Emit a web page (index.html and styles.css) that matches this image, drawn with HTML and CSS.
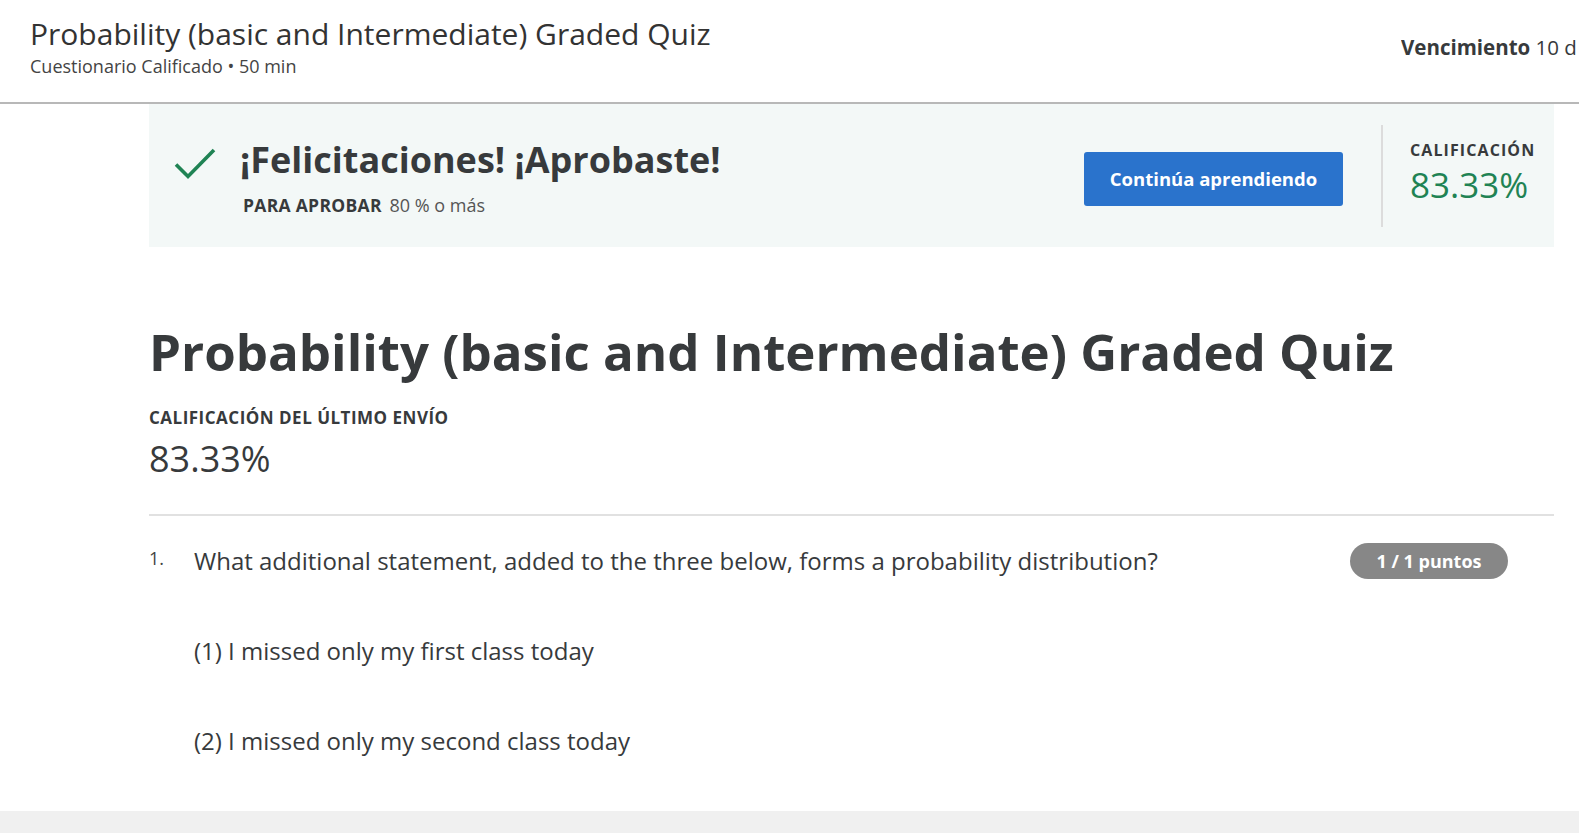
FILE: index.html
```html
<!DOCTYPE html>
<html lang="es">
<head>
<meta charset="utf-8">
<title>Probability (basic and Intermediate) Graded Quiz</title>
<link rel="stylesheet" href="styles.css">
</head>
<body>
<header class="topbar">
  <div class="topbar-info">
    <h1 class="topbar-title">Probability (basic and Intermediate) Graded Quiz</h1>
    <div class="topbar-sub">Cuestionario Calificado • 50 min</div>
  </div>
  <div class="topbar-due"><strong>Vencimiento</strong> 10 d</div>
</header>

<main class="content">
  <section class="banner">
    <div class="banner-main">
      <svg class="banner-check" width="42" height="34" viewBox="0 0 42 34" aria-hidden="true">
        <path d="M2 17.5 L14 29.5 L40 3" fill="none" stroke="#1f8354" stroke-width="3.6"/>
      </svg>
      <div class="banner-text">
        <h2 class="banner-title">¡Felicitaciones! ¡Aprobaste!</h2>
        <div class="banner-pass"><strong>PARA APROBAR</strong> 80 % o más</div>
      </div>
    </div>
    <button class="btn-primary">Continúa aprendiendo</button>
    <div class="banner-divider"></div>
    <div class="banner-grade">
      <div class="label-caps">CALIFICACIÓN</div>
      <div class="grade-value green">83.33%</div>
    </div>
  </section>

  <h2 class="quiz-title">Probability (basic and Intermediate) Graded Quiz</h2>
  <div class="label-caps last-label">CALIFICACIÓN DEL ÚLTIMO ENVÍO</div>
  <div class="grade-value big">83.33%</div>

  <hr class="rule">

  <div class="question">
    <span class="q-num">1.</span>
    <p class="q-text">What additional statement, added to the three below, forms a probability distribution?</p>
    <span class="badge">1 / 1 puntos</span>
  </div>
  <p class="option">(1) I missed only my first class today</p>
  <p class="option option-2">(2) I missed only my second class today</p>
</main>
<footer class="bottom-band"></footer>
</body>
</html>
```

FILE: styles.css
```css
* { box-sizing: border-box; }
html, body {
  margin: 0;
  padding: 0;
  overflow: hidden;
  background: #ffffff;
}
body {
  font-family: "Open Sans", "Noto Sans", sans-serif;
  color: #373a3c;
  width: 1579px;
}

.topbar {
  height: 104px;
  border-bottom: 2px solid #b8b8b8;
  display: flex;
  padding: 15px 0 0 30px;
  white-space: nowrap;
  overflow: hidden;
}
.topbar-title {
  margin: 0;
  font-size: 30px;
  line-height: 38px;
  font-weight: 400;
  color: #333;
}
.topbar-sub {
  margin-top: 1px;
  font-size: 18px;
  line-height: 24px;
  color: #444;
}
.topbar-due {
  margin-left: auto;
  flex: 0 0 auto;
  width: 178px;
  overflow: hidden;
  padding-top: 17px;
  font-size: 20.5px;
  line-height: 30px;
  color: #373a3c;
}
.topbar-due strong { font-weight: 700; }

.content {
  margin-left: 149px;
  width: 1405px;
}

.banner {
  height: 143px;
  background: #f3f8f7;
  display: flex;
  align-items: center;
  padding: 0 19px 0 25px;
}
.banner-main {
  flex: 1;
  display: flex;
  align-items: flex-start;
  gap: 24px;
  padding-top: 4px;
}
.banner-check { margin-top: 9px; }
.banner-title {
  margin: 0;
  font-size: 36px;
  line-height: 44px;
  font-weight: 700;
  color: #373a3c;
}
.banner-pass {
  margin-top: 11px;
  padding-left: 3px;
  font-size: 18px;
  line-height: 24px;
  color: #555;
}
.banner-pass strong {
  color: #373a3c;
  font-weight: 700;
  font-size: 17.5px;
  letter-spacing: 0.3px;
  margin-right: 3px;
}
.btn-primary {
  width: 259px;
  height: 54px;
  border: none;
  border-radius: 3px;
  background: #2a73cc;
  color: #fff;
  font-family: "Open Sans", "Noto Sans", sans-serif;
  font-weight: 700;
  font-size: 18.5px;
  margin-top: 6px;
}
.banner-divider {
  width: 2px;
  height: 102px;
  background: #dcdcdc;
  margin: 0 27px 0 38px;
}
.banner-grade {
  width: 125px;
  margin-top: -4px;
  display: flex;
  flex-direction: column;
}
.banner-grade .label-caps {
  letter-spacing: 1.1px;
  line-height: 22px;
}
.banner-grade .grade-value { line-height: 48px; }

.label-caps {
  font-size: 16px;
  line-height: 22px;
  font-weight: 700;
  letter-spacing: 0.9px;
  color: #373a3c;
}
.grade-value {
  font-size: 35px;
  line-height: 44px;
  font-weight: 400;
  color: #373a3c;
}
.grade-value.big { font-size: 36px; }
.green { color: #1f8354; }

.quiz-title {
  margin: 74px 0 0;
  font-size: 51px;
  line-height: 60px;
  font-weight: 700;
  color: #373a3c;
}
.last-label {
  margin-top: 25px;
  font-size: 17px;
  line-height: 24px;
  letter-spacing: 0.5px;
}
.last-label + .grade-value { margin-top: 7px; }

.rule {
  margin: 33px 0 0;
  border: none;
  height: 2px;
  background: #e1e1e1;
}

.question {
  margin-top: 27px;
  display: flex;
  align-items: center;
}
.q-num {
  width: 45px;
  font-size: 18px;
  align-self: flex-start;
  padding-top: 3px;
  color: #444;
}
.q-text {
  flex: 1;
  margin: 0;
  font-size: 24px;
  line-height: 32px;
  color: #373a3c;
}
.badge {
  width: 158px;
  height: 36px;
  border-radius: 18px;
  background: #878787;
  color: #fff;
  font-weight: 700;
  font-size: 18px;
  line-height: 36px;
  text-align: center;
  margin-right: 46px;
}
.option {
  margin: 56px 0 0 45px;
  font-size: 24px;
  line-height: 32px;
  color: #373a3c;
}
.option-2 { margin-top: 58px; }

.bottom-band {
  margin-top: 54px;
  height: 60px;
  background: #f0f0f0;
}
```
